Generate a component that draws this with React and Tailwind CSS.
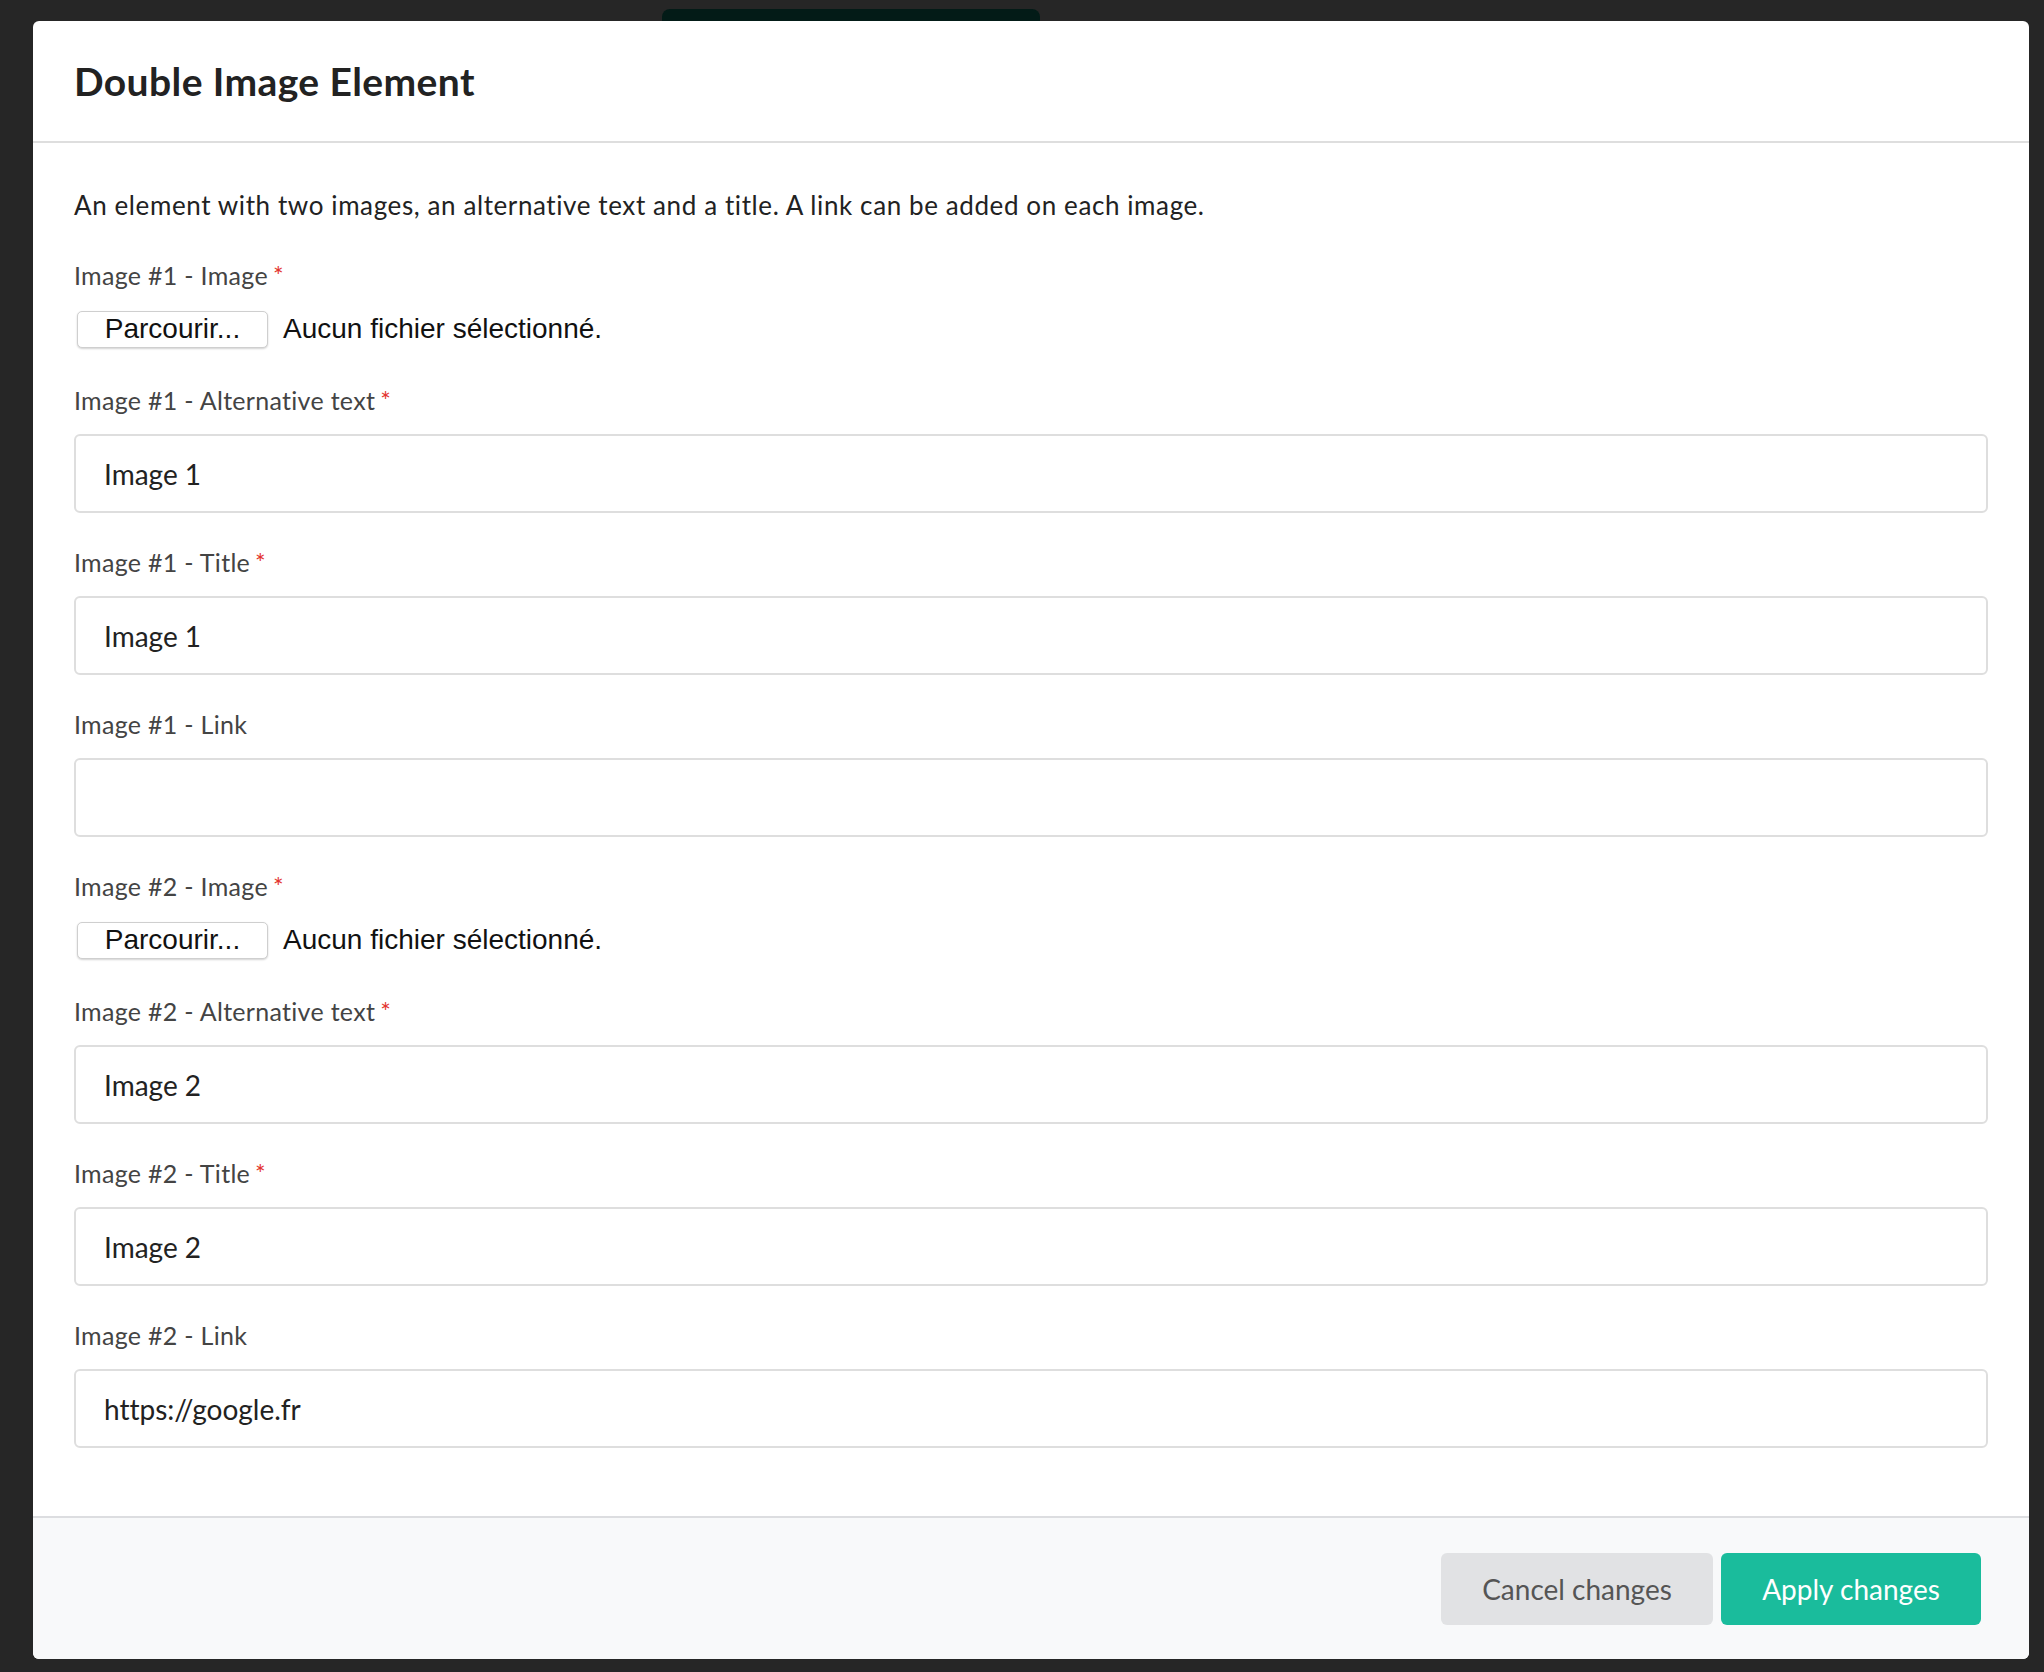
import React from "react"

const fields = [
    { label: "Image #1 - Image", required: true, file: true },
    { label: "Image #1 - Alternative text", required: true, value: "Image 1" },
    { label: "Image #1 - Title", required: true, value: "Image 1" },
    { label: "Image #1 - Link", required: false, value: "" },
    { label: "Image #2 - Image", required: true, file: true },
    { label: "Image #2 - Alternative text", required: true, value: "Image 2" },
    { label: "Image #2 - Title", required: true, value: "Image 2" },
    { label: "Image #2 - Link", required: false, value: "https://google.fr" },
]

function Label({ text, required, className }) {
    return (
        <label className={`block text-[25px] leading-[34px] tracking-[0.3px] text-[#444] ${className}`}>
            {text}
            {required && <span className="ml-[5px] text-[#e3342f]">*</span>}
        </label>
    )
}

function FileField({ label, required }) {
    return (
        <div className="mb-[34px]">
            <Label text={label} required={required} className="mb-[17px]" />
            <div className="flex h-[40px] items-center gap-[15px] font-['Liberation_Sans',Arial,sans-serif] text-[28px] text-[#111]">
                <button
                    type="button"
                    className="ml-[3px] flex h-[37px] w-[191px] items-center justify-center rounded-[5px] border border-[#cfcfcf] bg-white leading-none shadow-[0_1px_2px_rgba(0,0,0,0.18)]"
                >
                    Parcourir...
                </button>
                <span className="leading-none">Aucun fichier sélectionné.</span>
            </div>
        </div>
    )
}

function TextField({ label, required, value }) {
    return (
        <div className="mb-[32px]">
            <Label text={label} required={required} className="mb-[17px]" />
            <input
                readOnly
                value={value}
                className="block h-[79px] w-full rounded-[6px] border-2 border-[#dedede] bg-white px-[28px] text-[28px] text-[#222] outline-none"
            />
        </div>
    )
}

export default function App() {
    return (
        <div className="relative h-[1672px] w-[2044px] overflow-hidden bg-[#262626] pl-[33px] pt-[21px] font-['Lato',sans-serif] [font-variant-ligatures:none]">
            {/* bar of the page behind the overlay */}
            <div className="absolute left-[662px] top-[9px] h-[40px] w-[378px] rounded-t-[8px] bg-[#031b17]" />

            <div className="relative flex h-[1638px] w-[1996px] flex-col overflow-hidden rounded-[6px] bg-white">
                <header className="flex h-[122px] items-center border-b-2 border-[#dedede] px-[41px]">
                    <h1 className="text-[39px] font-bold leading-none tracking-[0.4px] text-[#222]">Double Image Element</h1>
                </header>

                <div className="flex-1 px-[41px] pt-[45px]">
                    <p className="mb-[36px] text-[26px] leading-[34px] tracking-[0.6px] text-[#222]">
                        An element with two images, an alternative text and a title. A link can be added on each image.
                    </p>
                    {fields.map((f) =>
                        f.file ? (
                            <FileField key={f.label} label={f.label} required={f.required} />
                        ) : (
                            <TextField key={f.label} label={f.label} required={f.required} value={f.value} />
                        )
                    )}
                </div>

                <footer className="flex h-[143px] items-center justify-end gap-[8px] border-t-2 border-[#dcdde0] bg-[#f8f9fa] pr-[48px]">
                    <button type="button" className="h-[72px] w-[272px] rounded-[6px] bg-[#e1e2e4] text-[28px] text-[#555]">
                        Cancel changes
                    </button>
                    <button type="button" className="h-[72px] w-[260px] rounded-[6px] bg-[#1abc9c] text-[28px] text-white">
                        Apply changes
                    </button>
                </footer>
            </div>
        </div>
    )
}
